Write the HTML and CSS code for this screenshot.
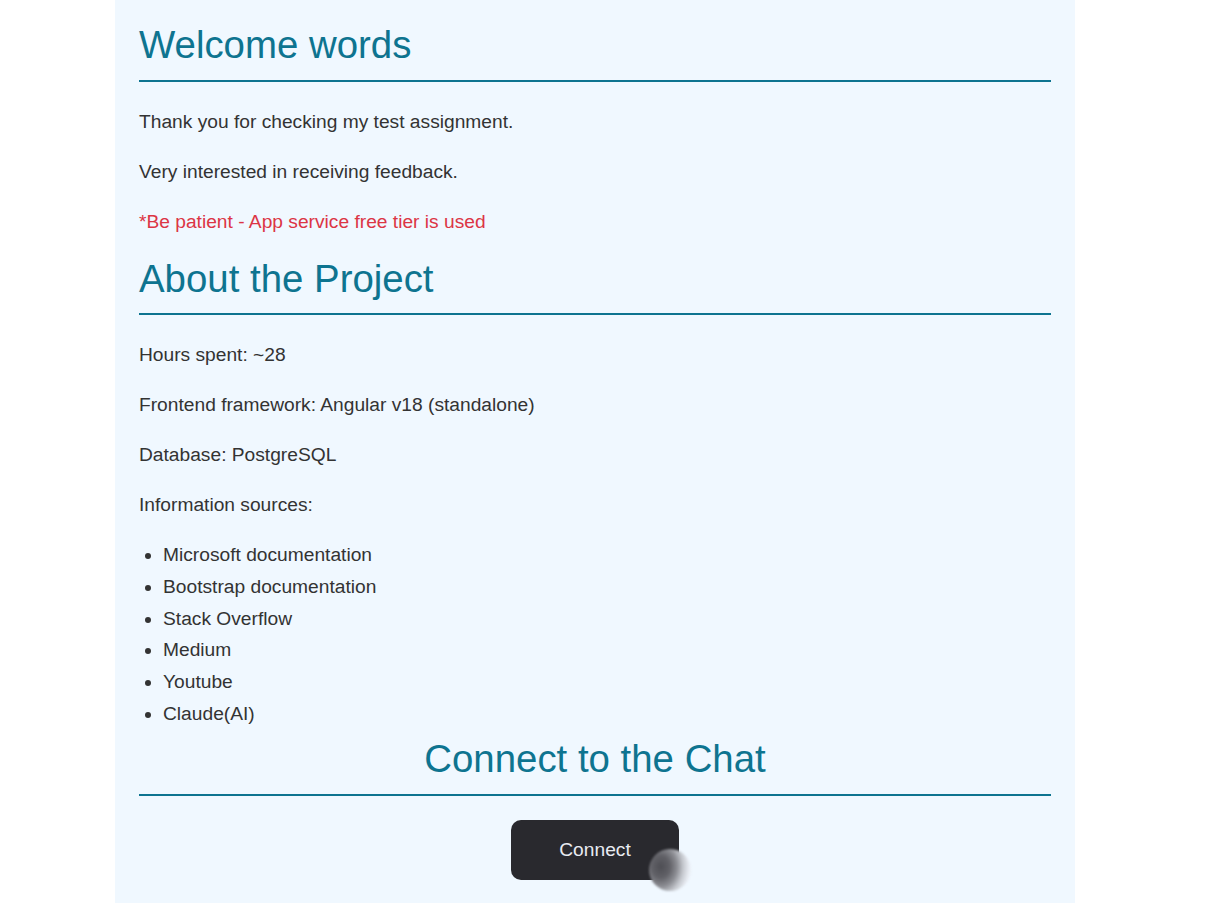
FILE: index.html
```html
<!DOCTYPE html>
<html lang="en">
<head>
<meta charset="utf-8">
<title>Welcome</title>
<link rel="stylesheet" href="styles.css">
</head>
<body>
<main class="page">
  <h1 class="section-title">Welcome words</h1>
  <p class="text">Thank you for checking my test assignment.</p>
  <p class="text">Very interested in receiving feedback.</p>
  <p class="text text-danger">*Be patient - App service free tier is used</p>

  <h1 class="section-title">About the Project</h1>
  <p class="text">Hours spent: ~28</p>
  <p class="text">Frontend framework: Angular v18 (standalone)</p>
  <p class="text">Database: PostgreSQL</p>
  <p class="text">Information sources:</p>
  <ul class="sources">
    <li>Microsoft documentation</li>
    <li>Bootstrap documentation</li>
    <li>Stack Overflow</li>
    <li>Medium</li>
    <li>Youtube</li>
    <li>Claude(AI)</li>
  </ul>

  <h1 class="section-title centered">Connect to the Chat</h1>
  <div class="actions">
    <div class="btn-wrap">
      <button class="btn-connect" type="button">Connect</button>
      <span class="hover-blob"></span>
    </div>
  </div>
</main>
</body>
</html>
```

FILE: styles.css
```css
* {
  box-sizing: border-box;
}

html, body {
  margin: 0;
  padding: 0;
  background: #ffffff;
}

body {
  font-family: "Liberation Sans", Arial, sans-serif;
  color: #333333;
}

.page {
  width: 960px;
  margin-left: 115px;
  min-height: 100vh;
  background: #f0f8ff;
  padding: 22px 24px 0 24px;
}

.section-title {
  margin: 0 0 24px 0;
  font-size: 38.4px;
  line-height: 1.2;
  font-weight: 400;
  color: #0e7490;
  padding-bottom: 11.5px;
  border-bottom: 2px solid #0e7490;
}

.centered {
  text-align: center;
}

.text {
  margin: 0 0 18.2px 0;
  font-size: 19.2px;
  line-height: 31.8px;
}

.text-danger {
  color: #dc3545;
}

.sources {
  margin: 0 0 6.5px 0;
  padding-left: 24px;
  font-size: 19.2px;
  line-height: 31.8px;
}

.actions {
  display: flex;
  justify-content: center;
}

.btn-wrap {
  position: relative;
}

.btn-connect {
  display: block;
  width: 168px;
  height: 60px;
  border: none;
  border-radius: 10px;
  background: #29292e;
  color: #e8ebf2;
  font-family: "Liberation Sans", Arial, sans-serif;
  font-size: 19.2px;
  cursor: pointer;
}

.hover-blob {
  position: absolute;
  left: 138px;
  top: 29px;
  width: 42px;
  height: 42px;
  border-radius: 50%;
  background: radial-gradient(ellipse 85% 105% at 28% 42%, #4e4e54 0%, #616167 25%, #8c8d93 45%, #c6c9cf 63%, #e9edf4 80%, rgba(240, 248, 255, 0.1) 100%);
  filter: blur(0.8px);
  pointer-events: none;
}
```
